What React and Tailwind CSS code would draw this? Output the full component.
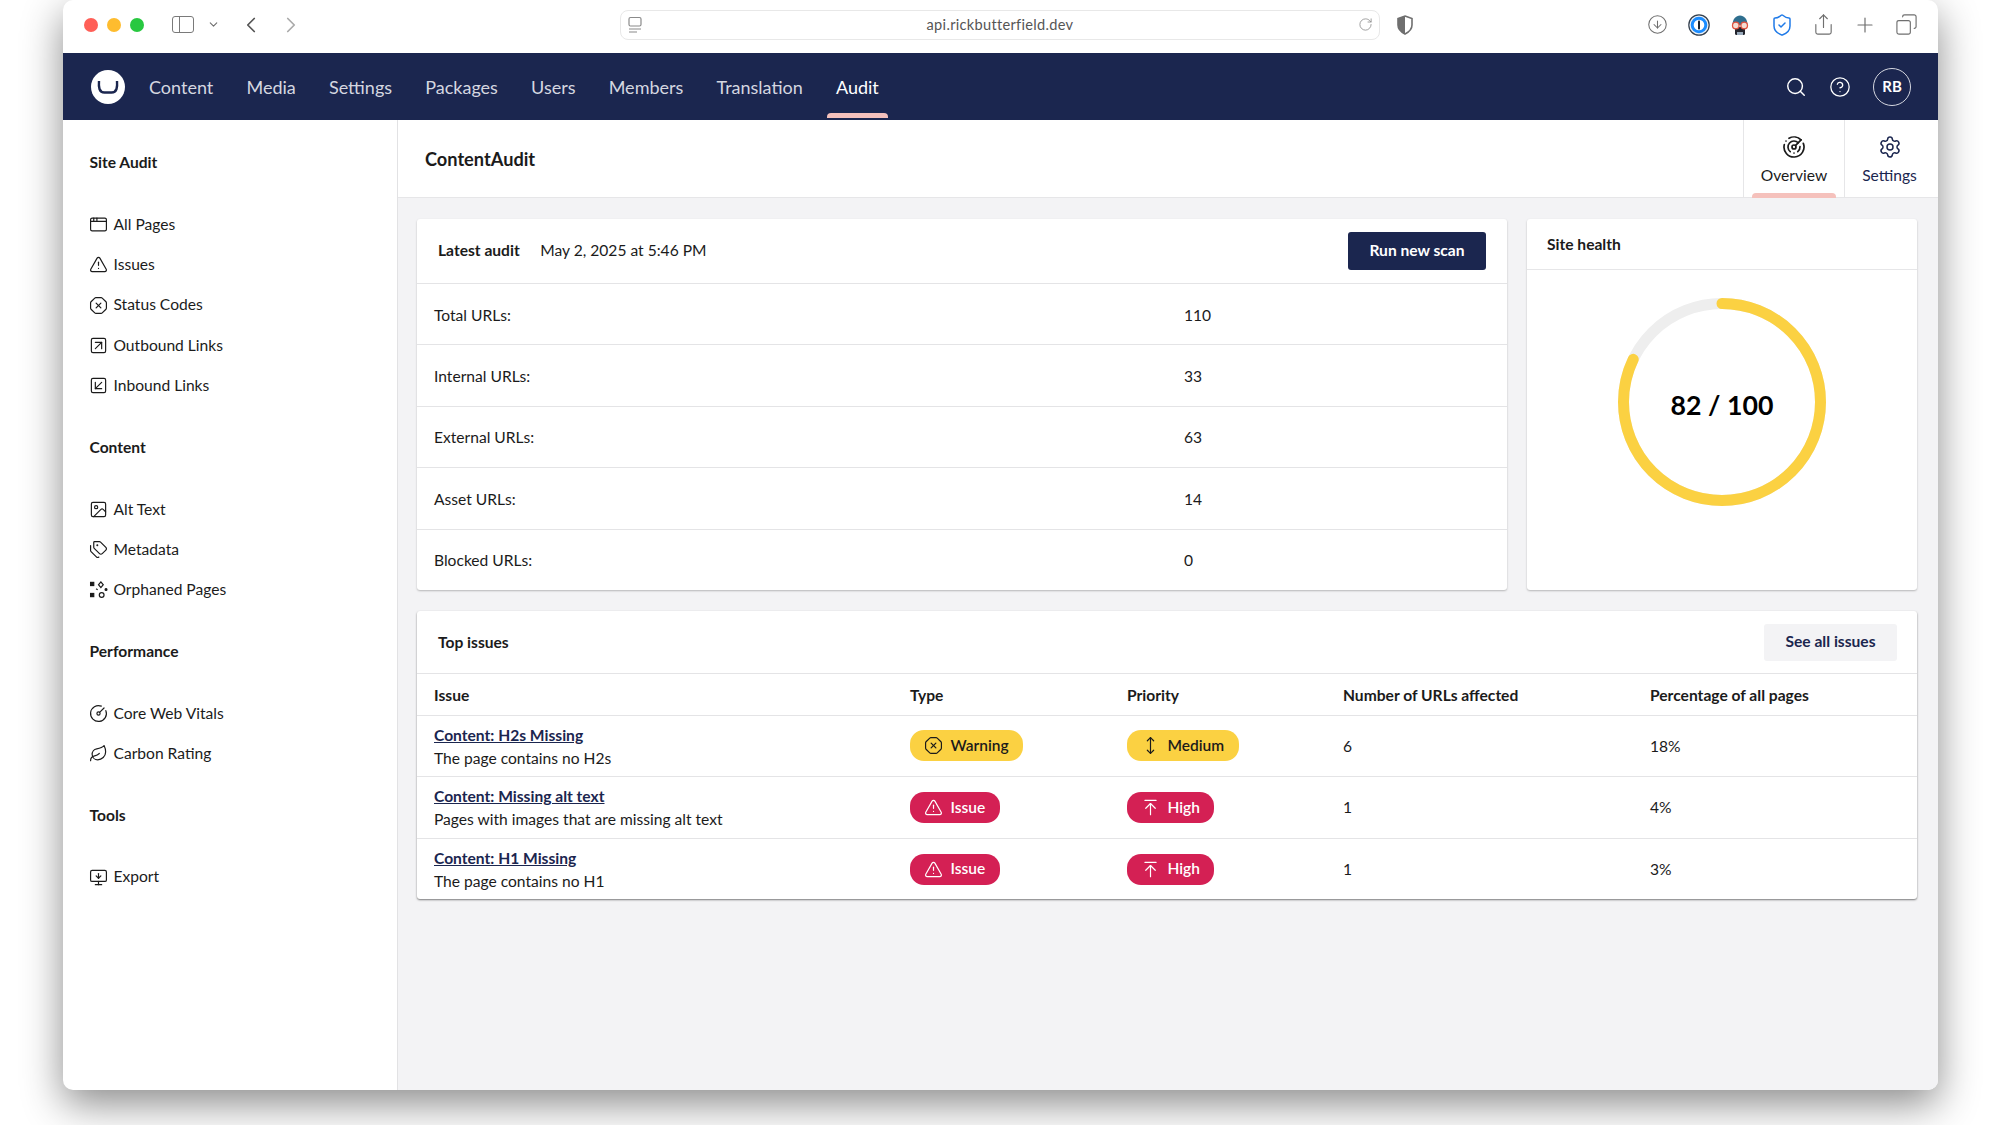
import React from "react";
import {
  AppWindow,
  ArrowUpToLine,
  ChevronDown,
  ChevronLeft,
  ChevronRight,
  CircleArrowDown,
  CircleGauge,
  CircleHelp,
  Copy,
  Image,
  Leaf,
  MonitorDown,
  MoveVertical,
  OctagonX,
  Plus,
  Radar,
  RotateCw,
  Search,
  Settings,
  Share,
  ShieldCheck,
  SquareArrowDownLeft,
  SquareArrowUpRight,
  Tags,
  TriangleAlert,
} from "lucide-react";

const OrphanIcon = (props) => (
  <svg viewBox="0 0 24 24" fill="none" stroke="currentColor" strokeWidth="2" {...props}>
    <rect x="2" y="3" width="4" height="4" fill="currentColor" />
    <rect x="2" y="17" width="4" height="4" fill="currentColor" />
    <circle cx="16" cy="19" r="3" />
    <path d="M15 2.5 18 6l-3 3.5L12 6z" />
    <circle cx="21.5" cy="12" r="1.2" fill="currentColor" />
    <path d="M9 11l2 1.5" />
  </svg>
);

const sections = [
  {
    title: "Site Audit",
    items: [
      ["All Pages", AppWindow],
      ["Issues", TriangleAlert],
      ["Status Codes", OctagonX],
      ["Outbound Links", SquareArrowUpRight],
      ["Inbound Links", SquareArrowDownLeft],
    ],
  },
  {
    title: "Content",
    items: [
      ["Alt Text", Image],
      ["Metadata", Tags],
      ["Orphaned Pages", OrphanIcon],
    ],
  },
  {
    title: "Performance",
    items: [
      ["Core Web Vitals", CircleGauge],
      ["Carbon Rating", Leaf],
    ],
  },
  { title: "Tools", items: [["Export", MonitorDown]] },
];

const navItems = ["Content", "Media", "Settings", "Packages", "Users", "Members", "Translation"];

const stats = [
  ["Total URLs:", "110"],
  ["Internal URLs:", "33"],
  ["External URLs:", "63"],
  ["Asset URLs:", "14"],
  ["Blocked URLs:", "0"],
];

const issues = [
  {
    name: "Content: H2s Missing",
    desc: "The page contains no H2s",
    warning: true,
    count: "6",
    pct: "18%",
  },
  {
    name: "Content: Missing alt text",
    desc: "Pages with images that are missing alt text",
    warning: false,
    count: "1",
    pct: "4%",
  },
  {
    name: "Content: H1 Missing",
    desc: "The page contains no H1",
    warning: false,
    count: "1",
    pct: "3%",
  },
];

const Badge = ({ yellow, icon: Icon, children }) => (
  <span
    className={`inline-flex h-[31px] items-center gap-[8px] rounded-[14px] pl-[13.5px] pr-[14.5px] text-[15.5px] font-semibold ${
      yellow ? "bg-[#fbd142] text-[#1b1b1b]" : "bg-[#d42054] text-white"
    }`}
  >
    <Icon size={19} strokeWidth={1.5} />
    {children}
  </span>
);

const ToolbarIcon = ({ children }) => (
  <span className="flex w-[41.5px] justify-center">{children}</span>
);

const App = () => {
  const tableCols = "grid grid-cols-[476px_217px_216px_307px_1fr] items-center pl-[17px]";
  return (
    <div className="h-[1125px] overflow-hidden bg-white font-['Lato',sans-serif] text-[15.6px] text-[#1b1b1b]">
      <div className="ml-[63px] flex h-[1090px] w-[1875px] flex-col overflow-hidden rounded-[10px] bg-white shadow-[0_14px_40px_rgba(0,0,0,0.46)]">
        {/* browser chrome */}
        <div className="relative flex h-[53px] shrink-0 items-center pb-[4px] text-[#6f6f6f]">
          <div className="ml-[21px] flex gap-[9px]">
            <span className="h-[14px] w-[14px] rounded-full bg-[#ff5f57]" />
            <span className="h-[14px] w-[14px] rounded-full bg-[#febc2e]" />
            <span className="h-[14px] w-[14px] rounded-full bg-[#28c840]" />
          </div>
          <div className="ml-[27.5px] flex h-[17px] w-[22px] overflow-hidden rounded-[3px] border-[1.5px] border-[#7a7a7a]">
            <span className="w-[7px] border-r-[1.5px] border-[#7a7a7a]" />
          </div>
          <ChevronDown size={13} className="ml-[13px]" />
          <ChevronLeft size={26} strokeWidth={1.6} className="ml-[18px] text-[#555]" />
          <ChevronRight size={26} strokeWidth={1.6} className="ml-[14px] text-[#aaa]" />
          <div className="ml-[316px] flex h-[30px] w-[760px] items-center rounded-lg border border-[#e8e8e8] pl-[7px] pr-[6px]">
            <svg viewBox="0 0 14 18" fill="none" stroke="#8a8a8a" strokeWidth="1.2" className="h-[18px] w-[14px]">
              <rect x="1" y="1.500" width="12" height="8.500" rx="1.500" />
              <path d="M1 13h12M1 16h8" />
            </svg>
            <span className="flex-1 pl-[1px] text-center text-[14.6px] tracking-[0.3px] text-[#555]">api.rickbutterfield.dev</span>
            <RotateCw size={15} strokeWidth={1.3} className="text-[#8a8a8a]" />
          </div>
          <svg viewBox="0 0 16 20" className="ml-[17px] h-[20px] w-[16px]">
            <path d="M8 1 15 3.5V10c0 4-3 7-7 9-4-2-7-5-7-9V3.5z" fill="none" stroke="#6f6f6f" strokeWidth="1.6" />
            <path d="M8 1 1 3.5V10c0 4 3 7 7 9z" fill="#6f6f6f" />
          </svg>
          <div className="ml-auto mr-[11px] flex items-center">
            <ToolbarIcon>
              <CircleArrowDown size={21} strokeWidth={1.2} />
            </ToolbarIcon>
            <ToolbarIcon>
              <svg viewBox="0 0 22 22" className="h-[22px] w-[22px]">
                <circle cx="11" cy="11" r="10.200" fill="#e8eef5" stroke="#333f4d" strokeWidth="1.200" />
                <circle cx="11" cy="11" r="6.800" fill="#fff" stroke="#1a8cff" strokeWidth="3" />
                <rect x="10" y="6.500" width="2" height="9" rx="0.800" fill="#1a2330" />
              </svg>
            </ToolbarIcon>
            <ToolbarIcon>
              <svg viewBox="0 0 22 22" className="h-[22px] w-[22px]">
                <path d="M3.500 11C3.500 5 7 1.500 11 1.500S18.500 5 18.500 11z" fill="#2f6f8f" />
                <rect x="6" y="13" width="10" height="8" rx="1.500" fill="#23252e" />
                <rect x="8" y="18" width="6" height="3" fill="#9ab" />
                <circle cx="6.800" cy="11.500" r="3.300" fill="#f4dcd2" stroke="#e0523f" strokeWidth="1.300" />
                <circle cx="15.200" cy="11.500" r="3.300" fill="#f4dcd2" stroke="#e0523f" strokeWidth="1.300" />
              </svg>
            </ToolbarIcon>
            <ToolbarIcon>
              <ShieldCheck size={24} strokeWidth={1.5} className="text-[#1f7ae8]" />
            </ToolbarIcon>
            <ToolbarIcon>
              <Share size={23} strokeWidth={1.2} />
            </ToolbarIcon>
            <ToolbarIcon>
              <Plus size={24} strokeWidth={1.2} />
            </ToolbarIcon>
            <ToolbarIcon>
              <Copy size={23} strokeWidth={1.2} className="-scale-x-100" />
            </ToolbarIcon>
          </div>
        </div>

        {/* backoffice header */}
        <div className="flex h-[67px] shrink-0 items-center bg-[#1b264f] text-[18px] text-[#d5d7e0]">
          <div className="ml-[28px] mr-[24px] flex h-[34px] w-[34px] items-center justify-center rounded-full bg-white">
            <svg viewBox="0 0 34 34" className="h-[34px] w-[34px]">
              <path d="M8 11C7.500 17 8 22.500 13.500 22.500h7c5.500 0 6-5.500 5.500-11.500" fill="none" stroke="#1b264f" strokeWidth="2.400" />
            </svg>
          </div>
          <nav className="flex gap-[33.2px] pt-[2px]">
            {navItems.map((item) => (
              <span key={item}>{item}</span>
            ))}
            <span className="relative text-white">
              Audit
              <span className="absolute -left-[9px] -right-[9px] top-[39px] h-[5px] rounded-t-[4px] bg-[#f5c1bc]" />
            </span>
          </nav>
          <div className="ml-auto mr-[27px] flex items-center gap-[22px] text-white">
            <Search size={22} strokeWidth={1.6} />
            <CircleHelp size={22} strokeWidth={1.4} />
            <span className="flex h-[38px] w-[38px] items-center justify-center rounded-full border-[1.5px] border-[#d5d7e0] text-[15px] font-bold">
              RB
            </span>
          </div>
        </div>

        <div className="flex min-h-0 flex-1">
          <aside className="flex w-[335px] shrink-0 flex-col gap-[21.8px] border-r border-[#e2e2e4] pl-[26.5px] pt-[23px]">
            {sections.map((section) => (
              <div key={section.title}>
                <h3 className="mb-[21.7px] flex h-[40px] items-center font-bold">{section.title}</h3>
                {section.items.map(([label, Icon]) => (
                  <div key={label} className="flex h-[40.2px] items-center gap-[6px]">
                    <Icon className="-ml-[1px] h-[19px] w-[19px]" strokeWidth={1.5} />
                    {label}
                  </div>
                ))}
              </div>
            ))}
          </aside>

          <main className="flex min-w-0 flex-1 flex-col bg-[#f3f3f5]">
            <div className="flex h-[78px] shrink-0 border-b border-[#e6e6e8] bg-white">
              <h1 className="ml-[27px] flex-1 pt-[25px] text-[18.2px] leading-7 font-bold">ContentAudit</h1>
              <div className="relative flex w-[101px] flex-col items-center border-l border-[#e6e6e8] pt-[15px]">
                <Radar size={24} strokeWidth={1.7} />
                <span className="mt-[5px]">Overview</span>
                <span className="absolute bottom-[-1px] h-[5px] w-[84px] rounded-t-[4px] bg-[#f5c1bc]" />
              </div>
              <div className="flex w-[94px] flex-col items-center border-l border-[#e6e6e8] pr-[4px] pt-[15px] text-[#1b264f]">
                <Settings size={24} strokeWidth={1.5} />
                <span className="mt-[5px]">Settings</span>
              </div>
            </div>

            <div className="pl-[19px] pr-[21px] pt-[21px]">
              <div className="grid h-[371px] grid-cols-[1fr_390px] gap-5">
                <section className="flex flex-col rounded-[3px] bg-white shadow-[0_1px_2px_rgba(0,0,0,0.25)]">
                  <div className="flex h-[65px] shrink-0 items-center border-b-[1.5px] border-[#e4e4e6] pl-[21px] pr-[21px]">
                    <span className="font-bold">Latest audit</span>
                    <span className="ml-[20.5px]">May 2, 2025 at 5:46 PM</span>
                    <button className="ml-auto h-[38px] w-[138px] rounded-[3px] bg-[#1b264f] font-bold text-white">
                      Run new scan
                    </button>
                  </div>
                  {stats.map(([label, value], i) => (
                    <div
                      key={label}
                      className={`grid flex-1 grid-cols-[750px_1fr] items-center pl-[17px] pt-[2px] ${
                        i < stats.length - 1 ? "border-b-[1.5px] border-[#e4e4e6]" : ""
                      }`}
                    >
                      <span>{label}</span>
                      <span>{value}</span>
                    </div>
                  ))}
                </section>

                <section className="flex flex-col rounded-[3px] bg-white shadow-[0_1px_2px_rgba(0,0,0,0.25)]">
                  <div className="flex h-[51px] shrink-0 items-center border-b border-[#e6e6e8] pl-[20px] pt-[1px] font-bold">
                    Site health
                  </div>
                  <div className="flex flex-1 justify-center pt-[28px]">
                    <div className="relative h-[208px] w-[208px]">
                      <svg viewBox="0 0 208 208" className="h-[208px] w-[208px] -rotate-90">
                        <circle cx="104" cy="104" r="98.500" fill="none" stroke="#eeeeee" strokeWidth="11" />
                        <circle
                          cx="104"
                          cy="104"
                          r="98.500"
                          fill="none"
                          stroke="#fbd142"
                          strokeWidth="11"
                          strokeLinecap="round"
                          strokeDasharray="507.500 618.900"
                        />
                      </svg>
                      <span className="absolute inset-0 flex items-center justify-center pt-[7px] text-[26.7px] font-bold text-black">
                        82 / 100
                      </span>
                    </div>
                  </div>
                </section>
              </div>

              <section className="mt-[21px] h-[288px] rounded-[3px] bg-white shadow-[0_1px_2px_rgba(0,0,0,0.5)]">
                <div className="flex h-[63px] items-center border-b border-[#e4e4e6] pl-[21px] pr-[20px]">
                  <span className="pt-[1px] font-bold">Top issues</span>
                  <button className="ml-auto h-[37px] w-[133px] rounded-[3px] bg-[#f3f3f5] font-bold text-[#1b264f]">
                    See all issues
                  </button>
                </div>
                <div className={`${tableCols} h-[42px] border-b-[1.5px] border-[#e4e4e6] pt-[2px] font-bold`}>
                  <span>Issue</span>
                  <span>Type</span>
                  <span>Priority</span>
                  <span>Number of URLs affected</span>
                  <span>Percentage of all pages</span>
                </div>
                {issues.map((issue, i) => (
                  <div
                    key={issue.name}
                    className={`${tableCols} h-[61.3px] ${i < issues.length - 1 ? "border-b-[1.5px] border-[#e4e4e6]" : ""}`}
                  >
                    <div className="pt-[1px] leading-[23px]">
                      <a className="block font-bold text-[#1b264f] underline">{issue.name}</a>
                      <span className="block">{issue.desc}</span>
                    </div>
                    <div>
                      {issue.warning ? (
                        <Badge yellow icon={OctagonX}>Warning</Badge>
                      ) : (
                        <Badge icon={TriangleAlert}>Issue</Badge>
                      )}
                    </div>
                    <div>
                      {issue.warning ? (
                        <Badge yellow icon={MoveVertical}>Medium</Badge>
                      ) : (
                        <Badge icon={ArrowUpToLine}>High</Badge>
                      )}
                    </div>
                    <span className="pt-[1px]">{issue.count}</span>
                    <span className="pt-[1px]">{issue.pct}</span>
                  </div>
                ))}
              </section>
            </div>
          </main>
        </div>
      </div>
    </div>
  );
};

export default App;
